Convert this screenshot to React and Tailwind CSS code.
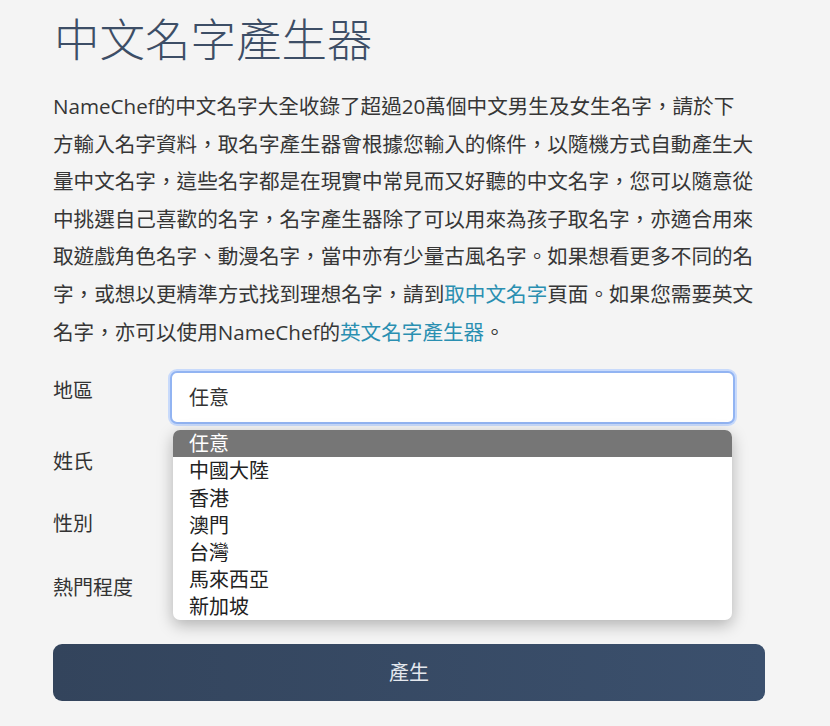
import React from "react";

const FONT = { fontFamily: '"Open Sans", "Noto Sans CJK TC", sans-serif' };

const options = ["任意", "中國大陸", "香港", "澳門", "台灣", "馬來西亞", "新加坡"];

export default function App() {
  return (
    <div className="min-h-[726px] w-full bg-[#f4f4f4]" style={FONT}>
      <div className="pl-[53px] pr-[65px] pt-[12px]">
        <h1 className="pl-[1px] text-[45.5px] leading-[54px] font-light text-[#3d4e66]">中文名字產生器</h1>
        <p className="mt-[22px] w-[720px] text-[20.6px] leading-[37.6px] text-[#363636] whitespace-nowrap">
          NameChef的中文名字大全收錄了超過20萬個中文男生及女生名字，請於下<br />
          方輸入名字資料，取名字產生器會根據您輸入的條件，以隨機方式自動產生大<br />
          量中文名字，這些名字都是在現實中常見而又好聽的中文名字，您可以隨意從<br />
          中挑選自己喜歡的名字，名字產生器除了可以用來為孩子取名字，亦適合用來<br />
          取遊戲角色名字、動漫名字，當中亦有少量古風名字。如果想看更多不同的名<br />
          字，或想以更精準方式找到理想名字，請到<a className="text-[#2a8fb1]">取中文名字</a>頁面。如果您需要英文<br />
          名字，亦可以使用NameChef的<a className="text-[#2a8fb1]">英文名字產生器</a>。
        </p>

        <form className="relative mt-[20px] flex flex-col">
          <div className="flex h-[53px] mb-[14px]">
            <label className="w-[117px] pt-[6px] text-[20px] leading-[28px] text-[#333]">地區</label>
            <div className="flex h-[53px] w-[565px] items-center rounded-[7px] border-2 border-[#92b4f2] bg-white pl-[17px] text-[20px] text-[#333] shadow-[0_0_0_2px_#c8dafb]">
              任意
            </div>
          </div>
          <div className="flex h-[53px] mb-[10px]">
            <label className="w-[117px] pt-[10px] text-[20px] leading-[28px] text-[#333]">姓氏</label>
            <div className="ml-[3px] h-[53px] w-[559px] rounded-[6px] bg-white"></div>
          </div>
          <div className="flex h-[53px] mb-[11px]">
            <label className="w-[117px] pt-[9px] text-[20px] leading-[28px] text-[#333]">性別</label>
            <div className="ml-[3px] h-[53px] w-[559px] rounded-[6px] bg-white"></div>
          </div>
          <div className="flex h-[53px]">
            <label className="w-[117px] pt-[9px] text-[20px] leading-[28px] text-[#333]">熱門程度</label>
            <div className="ml-[3px] h-[53px] w-[559px] rounded-[6px] bg-white"></div>
          </div>

          <ul className="absolute left-[120px] top-[59px] w-[559px] overflow-hidden rounded-[7px] bg-white shadow-[0_5px_16px_rgba(0,0,0,0.28)]">
            {options.map((o, i) => (
              <li
                key={o}
                className={
                  i === 0
                    ? "h-[27.2px] bg-[#767676] pl-[16px] text-[20px] leading-[27px] text-white"
                    : "h-[27.2px] pl-[16px] text-[20px] leading-[27px] text-[#222]"
                }
              >
                {o}
              </li>
            ))}
          </ul>

          <button
            type="button"
            className="mt-[26px] flex h-[57px] w-[712px] items-center justify-center rounded-[9px] bg-gradient-to-r from-[#33445c] to-[#3b506d] text-[20px] text-[#e4e8ee]"
          >
            產生
          </button>
        </form>
      </div>
    </div>
  );
}
